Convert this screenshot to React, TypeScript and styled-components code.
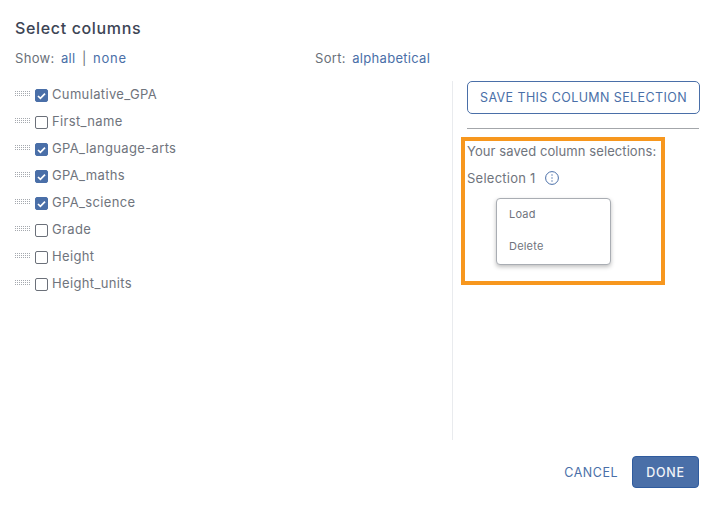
import React from "react";
import styled, { createGlobalStyle } from "styled-components";

const Global = createGlobalStyle`
  html, body { margin: 0; padding: 0; background: #fff; }
  body { font-family: Inter, "Open Sans", "Liberation Sans", sans-serif; color: #6a7079; }
  * { box-sizing: border-box; }
`;

const Page = styled.div`
  width: 715px;
  height: 510px;
  display: flex;
  flex-direction: column;
  padding: 19px 16px 22px 15px;
  overflow: hidden;
`;
const Title = styled.h1`
  margin: 0;
  font-size: 16px;
  line-height: 19px;
  font-weight: 500;
  letter-spacing: 0.65px;
  color: #3c4454;
`;
const Controls = styled.div`
  display: flex;
  margin-top: 11px;
  height: 18px;
  font-size: 13px;
  line-height: 18px;
  letter-spacing: 0.3px;
`;
const ControlGroup = styled.div<{ $w?: number }>`
  display: flex;
  gap: 6.5px;
  width: ${(p) => (p.$w ? `${p.$w}px` : "auto")};
`;
const Link = styled.a`
  color: #4a6fa8;
`;
const WideLink = styled(Link)`
  letter-spacing: 0.75px;
`;
const Main = styled.div`
  flex: 1;
  display: flex;
  margin-top: 14px;
`;
const ListPane = styled.div`
  flex: 0 0 438px;
  border-right: 1px solid #e9ebee;
`;
const Row = styled.div`
  display: flex;
  align-items: center;
  height: 27px;
  padding-bottom: 2px;
  font-size: 13px;
  letter-spacing: 0.35px;
  color: #6f747d;
`;
const Grip = styled.span`
  width: 15px;
  height: 5px;
  margin-right: 5px;
  background-image: radial-gradient(circle at 0.5px 0.5px, #a5a9af 0.6px, transparent 0.7px);
  background-size: 2px 2px;
`;
const Box = styled.span<{ $on: boolean }>`
  width: 13px;
  height: 13px;
  margin-right: 4px;
  margin-top: 4px;
  border-radius: 2px;
  border: 1px solid ${(p) => (p.$on ? "#4a6fa8" : "#6b7079")};
  background: ${(p) => (p.$on ? "#4a6fa8" : "#fff")};
  display: flex;
  align-items: center;
  justify-content: center;
`;
const SidePane = styled.div`
  flex: 1;
  min-width: 0;
  padding-left: 14px;
`;
const SaveButton = styled.button`
  width: 233px;
  height: 33px;
  border: 1px solid #4a6fa8;
  border-radius: 5px;
  background: #fff;
  color: #4a6fa8;
  font: 400 12.5px Inter, "Open Sans", sans-serif;
  letter-spacing: 0.4px;
  padding: 0;
`;
const Rule = styled.hr`
  width: 232px;
  margin: 14px 0 0;
  border: 0;
  border-top: 1px solid #a3a6aa;
`;
const Saved = styled.section`
  position: relative;
  width: 204px;
  height: 148px;
  margin: 8px 0 0 -6px;
  border: 4px solid #f7971e;
  padding: 1px 0 0 2px;
  font-size: 13px;
  letter-spacing: 0.08px;
  color: #6f747d;
`;
const SavedLine = styled.div`
  height: 18px;
  line-height: 18px;
  white-space: nowrap;
`;
const SelectionLine = styled(SavedLine)`
  display: flex;
  align-items: center;
  gap: 9px;
  margin-top: 9px;
  letter-spacing: 0.25px;
`;
const Menu = styled.div`
  position: absolute;
  left: 31px;
  top: 57px;
  width: 115px;
  height: 67px;
  background: #fff;
  border: 1px solid #a9adb3;
  border-radius: 4px;
  box-shadow: 0 2px 4px rgba(0, 0, 0, 0.25);
  padding: 7px 0 0 12px;
  font-size: 11px;
  letter-spacing: 0.2px;
`;
const MenuItem = styled.div`
  height: 32px;
  line-height: 16px;
`;
const Footer = styled.div`
  display: flex;
  justify-content: flex-end;
  align-items: center;
  gap: 14px;
  margin-top: 16px;
`;
const Cancel = styled.button`
  border: 0;
  padding: 0;
  background: none;
  color: #4a6fa8;
  font: 400 12.5px Inter, "Open Sans", sans-serif;
  letter-spacing: 0.5px;
`;
const Done = styled.button`
  width: 67px;
  height: 32px;
  border: 1px solid #2f5b9e;
  border-radius: 4px;
  background: #4a6fa8;
  color: #f1f4f8;
  font: 500 12.5px Inter, "Open Sans", sans-serif;
  letter-spacing: 0.7px;
  padding: 0;
`;

const columns: [string, boolean][] = [
  ["Cumulative_GPA", true],
  ["First_name", false],
  ["GPA_language-arts", true],
  ["GPA_maths", true],
  ["GPA_science", true],
  ["Grade", false],
  ["Height", false],
  ["Height_units", false],
];

export default function App() {
  return (
    <Page>
      <Global />
      <Title>Select columns</Title>
      <Controls>
        <ControlGroup $w={300}>
          <span>Show:</span>
          <Link>all</Link>
          <span>|</span>
          <WideLink>none</WideLink>
        </ControlGroup>
        <ControlGroup>
          <span>Sort:</span>
          <Link>alphabetical</Link>
        </ControlGroup>
      </Controls>
      <Main>
        <ListPane>
          {columns.map(([name, on]) => (
            <Row key={name}>
              <Grip />
              <Box $on={on}>
                {on && (
                  <svg width="9" height="8" viewBox="0 0 9 8">
                    <path d="M1 4l2.4 2.4L8 1.6" fill="none" stroke="#fff" strokeWidth="1.7" />
                  </svg>
                )}
              </Box>
              {name}
            </Row>
          ))}
        </ListPane>
        <SidePane>
          <SaveButton>SAVE THIS COLUMN SELECTION</SaveButton>
          <Rule />
          <Saved>
            <SavedLine>Your saved column selections:</SavedLine>
            <SelectionLine>
              Selection 1
              <svg width="14" height="14" viewBox="0 0 14 14">
                <circle cx="7" cy="7" r="6.4" fill="none" stroke="#4a6fa8" />
                <g fill="#4a6fa8">
                  <circle cx="7" cy="4" r="0.7" />
                  <circle cx="7" cy="7" r="0.7" />
                  <circle cx="7" cy="10" r="0.7" />
                </g>
              </svg>
            </SelectionLine>
            <Menu>
              <MenuItem>Load</MenuItem>
              <MenuItem>Delete</MenuItem>
            </Menu>
          </Saved>
        </SidePane>
      </Main>
      <Footer>
        <Cancel>CANCEL</Cancel>
        <Done>DONE</Done>
      </Footer>
    </Page>
  );
}
